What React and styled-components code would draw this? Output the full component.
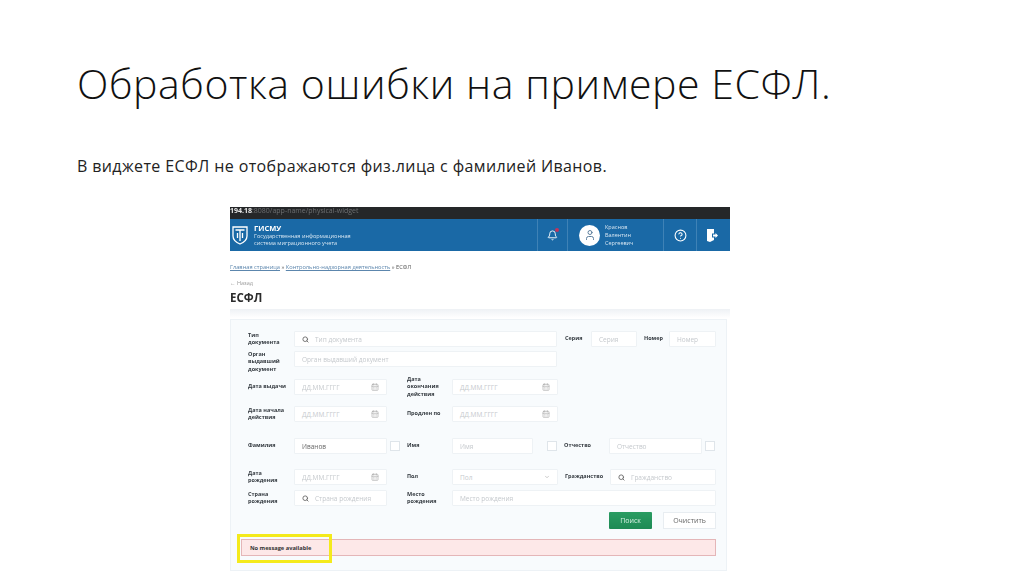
import React from "react";
import styled, { createGlobalStyle } from "styled-components";
import { Search, CalendarDays, Bell, User, CircleHelp, ChevronDown } from "lucide-react";

const Global = createGlobalStyle`
  html, body { margin: 0; padding: 0; background: #fff; }
  body { width: 1024px; height: 574px; overflow: hidden; font-family: "Open Sans", sans-serif; }
`;

function LogoIcon() {
  return (
    <svg width="16" height="19" viewBox="0 0 16 19" fill="none" stroke="#fff" strokeWidth="1.3">
      <path d="M1 1h14v9c0 4-3.5 6.5-7 8-3.5-1.5-7-4-7-8z" />
      <path d="M3.5 4h9M8 4v11M5.500 7v5M10.5 7v5" />
    </svg>
  );
}

function ExitIcon() {
  return (
    <svg width="11" height="13" viewBox="0 0 11 13" fill="#fff">
      <path d="M0 0h7v4.5H5v4h2V11l-4 2-3-1z" />
      <path d="M6 5.5h2.5V4L11 6.5 8.5 9V7.5H6z" />
    </svg>
  );
}

export default function App() {
  return (
    <Slide>
      <Global />
      <Title>Обработка ошибки на примере ЕСФЛ.</Title>
      <Subtitle>В виджете ЕСФЛ не отображаются физ.лица с фамилией Иванов.</Subtitle>
      <Shot>
        <UrlBar>
          <b>194.18</b>:8080/app-name/physical-widget
        </UrlBar>
        <Header>
          <Brand>
            <LogoIcon />
            <BrandText>
              <strong>ГИСМУ</strong>
              <span>Государственная информационная</span>
              <span>система миграционного учета</span>
            </BrandText>
          </Brand>
          <HeaderCell $w={30}>
            <Bell size={11} color="#fff" />
            <Dot />
          </HeaderCell>
          <UserCell>
            <Avatar>
              <User size={12} color="#5d7f9e" />
            </Avatar>
            <UserName>
              Краснов
              <br />
              Валентин
              <br />
              Сергеевич
            </UserName>
          </UserCell>
          <HeaderCell $w={33}>
            <CircleHelp size={13} color="#fff" />
          </HeaderCell>
          <HeaderCell $w={31}>
            <ExitIcon />
          </HeaderCell>
        </Header>
        <Crumbs>
          <u>Главная страница</u> » <u>Контрольно-надзорная деятельность</u> » ЕСФЛ
        </Crumbs>
        <Back>← Назад</Back>
        <PageTitle>ЕСФЛ</PageTitle>
        <Shade />
        <Panel>
          <Row>
            <Label $w={46}>Тип документа</Label>
            <Field $w={263}>
              <SearchMark />
              Тип документа
            </Field>
            <Label $w={26} $ml={8}>Серия</Label>
            <Field $w={46}>Серия</Field>
            <Label $w={25} $ml={7}>Номер</Label>
            <Field $w={47}>Номер</Field>
          </Row>
          <Row $mt={4}>
            <Label $w={46} $dy={3}>Орган выдавший документ</Label>
            <Field $w={263}>Орган выдавший документ</Field>
          </Row>
          <Row $mt={12}>
            <Label $w={46}>Дата выдачи</Label>
            <DateField $w={93} />
            <Label $w={45} $ml={20}>Дата окончания действия</Label>
            <DateField $w={106} />
          </Row>
          <Row $mt={11}>
            <Label $w={46}>Дата начала действия</Label>
            <DateField $w={93} />
            <Label $w={45} $ml={20}>Продлен по</Label>
            <DateField $w={106} />
          </Row>
          <Row $mt={16}>
            <Label $w={46}>Фамилия</Label>
            <Field $w={93} $value>Иванов</Field>
            <Check />
            <Label $w={45} $ml={7}>Имя</Label>
            <Field $w={81}>Имя</Field>
            <Check $ml={14} />
            <Label $w={45} $ml={7}>Отчество</Label>
            <Field $w={93}>Отчество</Field>
            <Check />
          </Row>
          <Row $mt={15}>
            <Label $w={46}>Дата рождения</Label>
            <DateField $w={93} />
            <Label $w={45} $ml={20}>Пол</Label>
            <Field $w={106} $between>
              Пол
              <ChevronDown size={6} color="#999" />
            </Field>
            <Label $w={45} $ml={7}>Гражданство</Label>
            <Field $w={106}>
              <SearchMark />
              Гражданство
            </Field>
          </Row>
          <Row $mt={5}>
            <Label $w={46}>Страна рождения</Label>
            <Field $w={93}>
              <SearchMark />
              Страна рождения
            </Field>
            <Label $w={45} $ml={20}>Место рождения</Label>
            <Field $w={264}>Место рождения</Field>
          </Row>
          <Actions>
            <SearchButton>Поиск</SearchButton>
            <ClearButton>Очистить</ClearButton>
          </Actions>
          <Alert>
            No message available
            <Highlight />
          </Alert>
        </Panel>
      </Shot>
    </Slide>
  );
}

function DateField({ $w }) {
  return (
    <Field $w={$w} $between>
      ДД.ММ.ГГГГ
      <CalendarDays size={8} color="#aaa" />
    </Field>
  );
}

function SearchMark() {
  return (
    <SearchSlot>
      <Search size={7} color="#666" strokeWidth={3} />
    </SearchSlot>
  );
}

const Slide = styled.div`
  width: 1024px;
  height: 574px;
  overflow: hidden;
  display: flex;
  flex-direction: column;
`;

const Title = styled.h1`
  margin: 52px 0 0 77px;
  font-family: "Open Sans", sans-serif;
  font-weight: 300;
  font-size: 41px;
  line-height: 62px;
  letter-spacing: 0.58px;
  color: #111;
  white-space: nowrap;
`;

const Subtitle = styled.p`
  margin: 39px 0 0 77px;
  font-family: "Open Sans", sans-serif;
  font-size: 16px;
  line-height: 26px;
  letter-spacing: 0.38px;
  color: #222;
  white-space: nowrap;
`;

const Shot = styled.div`
  margin: 28px 0 0 230px;
  width: 500px;
  height: 367px;
  flex: none;
  display: flex;
  flex-direction: column;
  background: #fff;
  filter: blur(0.7px);
`;

const UrlBar = styled.div`
  height: 12px;
  background: #252729;
  color: #6d6f71;
  font-size: 7px;
  line-height: 7px;
  white-space: nowrap;

  b {
    color: #e8e8e8;
  }
`;

const Header = styled.div`
  height: 32px;
  background: #1a69a6;
  display: flex;
  padding-right: 3px;
`;

const Brand = styled.div`
  flex: 1;
  display: flex;
  align-items: center;
  gap: 6px;
  padding-left: 2px;
`;

const BrandText = styled.div`
  display: flex;
  flex-direction: column;
  color: #d7e6f2;
  font-size: 5.6px;
  line-height: 6.5px;
  white-space: nowrap;

  strong {
    color: #fff;
    font-size: 7.5px;
    line-height: 9px;
  }
`;

const HeaderCell = styled.div`
  position: relative;
  width: ${(p) => p.$w}px;
  display: flex;
  align-items: center;
  justify-content: center;
  border-left: 1px solid #3f82b6;
  box-sizing: border-box;
`;

const Dot = styled.i`
  position: absolute;
  top: 9px;
  left: 17px;
  width: 4px;
  height: 4px;
  border-radius: 50%;
  background: #c2335c;
`;

const UserCell = styled.div`
  width: 96px;
  box-sizing: border-box;
  border-left: 1px solid #3f82b6;
  display: flex;
  align-items: center;
  gap: 5px;
  padding-left: 11px;
`;

const Avatar = styled.div`
  width: 21px;
  height: 21px;
  border-radius: 50%;
  background: #fff;
  display: flex;
  align-items: center;
  justify-content: center;
`;

const UserName = styled.div`
  color: #d7e6f2;
  font-size: 5.5px;
  line-height: 8px;
`;

const Crumbs = styled.div`
  margin-top: 12px;
  font-size: 5.7px;
  line-height: 8px;
  color: #555;

  u {
    color: #5c86ad;
  }
`;

const Back = styled.div`
  margin-top: 8px;
  font-size: 5.5px;
  line-height: 8px;
  color: #999;
`;

const PageTitle = styled.div`
  margin-top: 3px;
  font-size: 11.5px;
  line-height: 16px;
  font-weight: 700;
  color: #2b2b2b;
`;

const Shade = styled.div`
  height: 9px;
  margin-top: 3px;
  background: linear-gradient(#eef1f5, #fff);
`;

const Panel = styled.div`
  margin-top: 1px;
  width: 497px;
  height: 252px;
  box-sizing: border-box;
  background: #f8fbfd;
  border: 1px solid #edf2f6;
  padding: 11px 10px 0 17px;
`;

const Row = styled.div`
  height: 16px;
  margin-top: ${(p) => p.$mt || 0}px;
  display: flex;
  align-items: center;
`;

const Label = styled.div`
  flex: none;
  width: ${(p) => p.$w}px;
  box-sizing: border-box;
  padding-right: 6px;
  margin-left: ${(p) => p.$ml || 0}px;
  position: relative;
  top: ${(p) => p.$dy || 0}px;
  font-size: 5.5px;
  line-height: 7.5px;
  font-weight: 700;
  color: #33393f;
`;

const Field = styled.div`
  flex: none;
  width: ${(p) => p.$w}px;
  height: 16px;
  box-sizing: border-box;
  display: flex;
  align-items: center;
  justify-content: ${(p) => (p.$between ? "space-between" : "flex-start")};
  padding: 0 7px;
  background: #fff;
  border: 1px solid #eef2f5;
  border-radius: 1px;
  font-size: 6.5px;
  color: ${(p) => (p.$value ? "#666" : "#c5c9cd")};
  white-space: nowrap;
`;

const SearchSlot = styled.span`
  display: flex;
  margin-right: 6px;
`;

const Check = styled.div`
  flex: none;
  width: 10px;
  height: 10px;
  margin-left: ${(p) => p.$ml ?? 3}px;
  background: #fff;
  border: 1px solid #dfe5ea;
  box-sizing: border-box;
`;

const Actions = styled.div`
  margin-top: 6px;
  display: flex;
  justify-content: flex-end;
  gap: 11px;
`;

const SearchButton = styled.div`
  width: 43px;
  height: 17px;
  display: flex;
  align-items: center;
  justify-content: center;
  border-radius: 1px;
  background: linear-gradient(#2a9c62, #1e8a54);
  color: #d6efe2;
  font-size: 7px;
`;

const ClearButton = styled.div`
  width: 53px;
  height: 17px;
  box-sizing: border-box;
  display: flex;
  align-items: center;
  justify-content: center;
  background: #fff;
  border: 1px solid #e8edf1;
  color: #666;
  font-size: 7px;
`;

const Alert = styled.div`
  position: relative;
  margin: 10px 0 0 -7px;
  height: 17px;
  box-sizing: border-box;
  display: flex;
  align-items: center;
  padding-left: 8px;
  background: #fde8e8;
  border: 1px solid #e4b6b8;
  font-size: 5.7px;
  font-weight: 700;
  color: #333;
`;

const Highlight = styled.span`
  position: absolute;
  left: -5px;
  top: -6px;
  width: 95px;
  height: 29px;
  box-sizing: border-box;
  border: 3px solid #f4ea1c;
`;
